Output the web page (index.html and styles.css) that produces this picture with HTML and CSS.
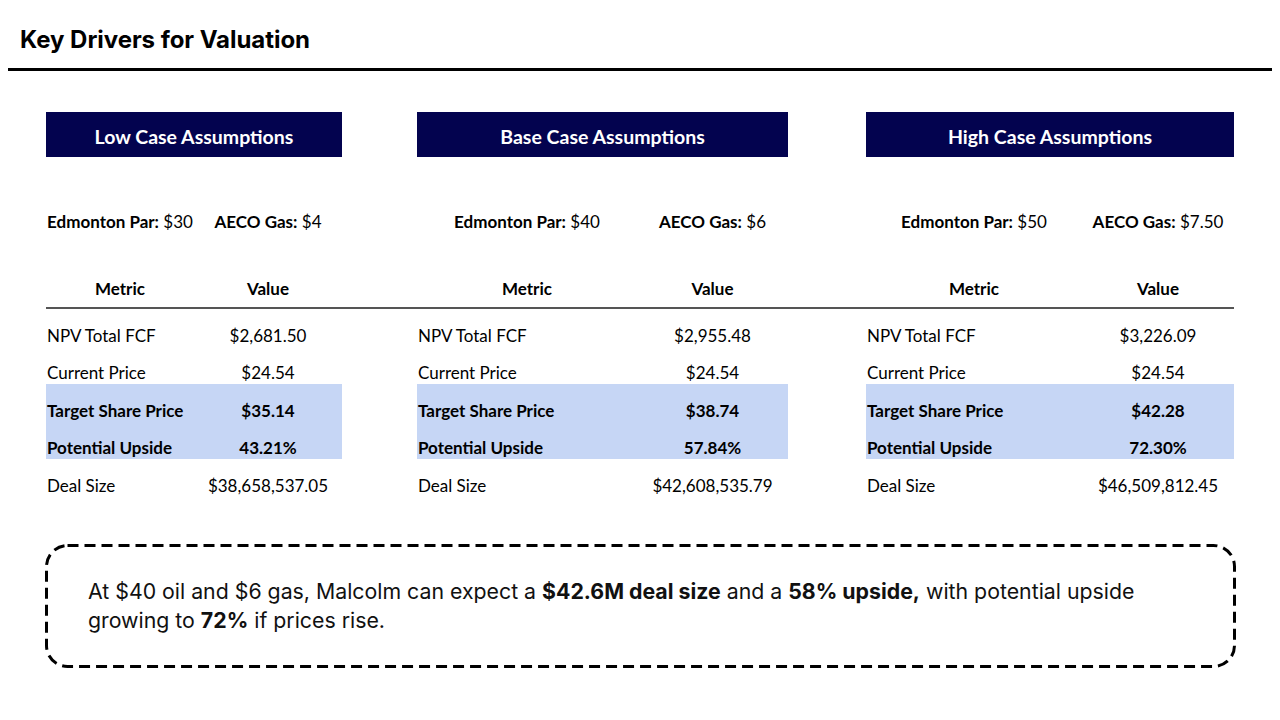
FILE: index.html
```html
<!DOCTYPE html>
<html lang="en">
<head>
<meta charset="utf-8">
<title>Key Drivers for Valuation</title>
<link rel="stylesheet" href="styles.css">
</head>
<body>
<div class="slide">
  <h1 class="title">Key Drivers for Valuation</h1>
  <div class="rule"></div>

  <div class="panels">
    <section class="panel panel-low">
      <div class="banner">Low Case Assumptions</div>
      <div class="row params">
        <div class="cell center"><b>Edmonton Par:</b> $30</div>
        <div class="cell center"><b>AECO Gas:</b> $4</div>
      </div>
      <div class="thead">
        <div class="row head">
          <div class="cell center">Metric</div>
          <div class="cell center">Value</div>
        </div>
      </div>
      <div class="row data"><div class="cell">NPV Total FCF</div><div class="cell center">$2,681.50</div></div>
      <div class="row data"><div class="cell">Current Price</div><div class="cell center">$24.54</div></div>
      <div class="row data hl"><div class="cell">Target Share Price</div><div class="cell center">$35.14</div></div>
      <div class="row data hl"><div class="cell">Potential Upside</div><div class="cell center">43.21%</div></div>
      <div class="row data"><div class="cell">Deal Size</div><div class="cell center">$38,658,537.05</div></div>
    </section>

    <section class="panel panel-base">
      <div class="banner">Base Case Assumptions</div>
      <div class="row params">
        <div class="cell center"><b>Edmonton Par:</b> $40</div>
        <div class="cell center"><b>AECO Gas:</b> $6</div>
      </div>
      <div class="thead">
        <div class="row head">
          <div class="cell center">Metric</div>
          <div class="cell center">Value</div>
        </div>
      </div>
      <div class="row data"><div class="cell">NPV Total FCF</div><div class="cell center">$2,955.48</div></div>
      <div class="row data"><div class="cell">Current Price</div><div class="cell center">$24.54</div></div>
      <div class="row data hl"><div class="cell">Target Share Price</div><div class="cell center">$38.74</div></div>
      <div class="row data hl"><div class="cell">Potential Upside</div><div class="cell center">57.84%</div></div>
      <div class="row data"><div class="cell">Deal Size</div><div class="cell center">$42,608,535.79</div></div>
    </section>

    <section class="panel panel-high">
      <div class="banner">High Case Assumptions</div>
      <div class="row params">
        <div class="cell center"><b>Edmonton Par:</b> $50</div>
        <div class="cell center"><b>AECO Gas:</b> $7.50</div>
      </div>
      <div class="thead">
        <div class="row head">
          <div class="cell center">Metric</div>
          <div class="cell center">Value</div>
        </div>
      </div>
      <div class="row data"><div class="cell">NPV Total FCF</div><div class="cell center">$3,226.09</div></div>
      <div class="row data"><div class="cell">Current Price</div><div class="cell center">$24.54</div></div>
      <div class="row data hl"><div class="cell">Target Share Price</div><div class="cell center">$42.28</div></div>
      <div class="row data hl"><div class="cell">Potential Upside</div><div class="cell center">72.30%</div></div>
      <div class="row data"><div class="cell">Deal Size</div><div class="cell center">$46,509,812.45</div></div>
    </section>
  </div>

  <div class="callout">
    <svg class="callout-frame" width="1191" height="124" aria-hidden="true">
      <rect x="1.5" y="1.5" width="1188" height="121" rx="21" ry="21" fill="none" stroke="#000" stroke-width="3" stroke-dasharray="11 6"/>
    </svg>
    <p>At $40 oil and $6 gas, Malcolm can expect a <b>$42.6M deal size</b> and a <b>58% upside,</b> with potential upside growing to <b>72%</b> if prices rise.</p>
  </div>
</div>
</body>
</html>
```

FILE: styles.css
```css
* { box-sizing: border-box; }

html, body {
  margin: 0;
  padding: 0;
  background: #ffffff;
}

.slide {
  width: 1280px;
  height: 720px;
  overflow: hidden;
  color: #000;
  font-family: Lato, "Open Sans", sans-serif;
}

.title {
  margin: 26px 0 0 20px;
  font-family: Inter, "Liberation Sans", sans-serif;
  font-weight: 700;
  font-size: 24px;
  line-height: 28px;
  letter-spacing: -0.05px;
}

.rule {
  margin: 14px 8px 0 8px;
  border-top: 3px solid #000;
}

.panels {
  display: flex;
  margin-top: 41px;
  padding-left: 46px;
}

.panel-low  { --c1: 148px; --c2: 148px; width: 371px; }
.panel-base { --c1: 220px; --c2: 151px; width: 449px; }
.panel-high { --c1: 216px; --c2: 152px; width: 368px; }

.banner {
  width: calc(var(--c1) + var(--c2));
  height: 45px;
  background: #03034f;
  color: #fff;
  font-weight: 700;
  font-size: 19.5px;
  display: flex;
  align-items: center;
  justify-content: center;
  padding-top: 3px;
}

.row {
  display: grid;
  grid-template-columns: var(--c1) var(--c2);
  width: calc(var(--c1) + var(--c2));
  font-size: 17px;
}

.cell {
  white-space: nowrap;
  padding-left: 1px;
}

.center {
  text-align: center;
  padding-left: 0;
}

.params {
  margin-top: 50px;
  line-height: 30px;
}

.thead {
  margin-top: 34px;
  border-bottom: 2px solid #555;
}

.head {
  line-height: 36px;
  font-weight: 700;
}

.data .cell {
  padding-top: 15.5px;
  line-height: 22px;
  height: 37.5px;
}

.hl {
  background: #c6d6f5;
  font-weight: 700;
}

.callout {
  position: relative;
  margin: 47px 0 0 45px;
  width: 1191px;
  height: 124px;
  padding: 33px 80px 0 43px;
  font-family: Inter, "Liberation Sans", sans-serif;
  font-size: 21.3px;
  line-height: 29px;
  color: #111;
}

.callout-frame {
  position: absolute;
  left: 0;
  top: 0;
}

.callout p {
  margin: 0;
}

.callout b {
  font-weight: 700;
}
```
